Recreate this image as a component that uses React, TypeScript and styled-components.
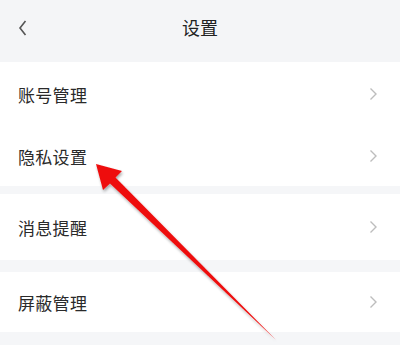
import styled, { createGlobalStyle } from "styled-components";

const GlobalStyle = createGlobalStyle`
    html, body {
        margin: 0;
        padding: 0;
        background: #f5f6f8;
    }
    body {
        font-family: "Noto Sans CJK SC", "Noto Sans", sans-serif;
    }
`;

const Page = styled.div`
    position: relative;
    width: 400px;
    height: 345px;
    overflow: hidden;
    background: #f5f6f8;
`;

const Header = styled.header`
    height: 62px;
    display: flex;
    align-items: center;
    justify-content: center;
    position: relative;
    background: #f4f5f7;
`;

const Back = styled.div`
    position: absolute;
    left: 18px;
    top: 20px;
    display: flex;
`;

const Title = styled.h1`
    margin: 0;
    font-size: 18px;
    font-weight: 400;
    color: #222;
    transform: translateY(-4px);
`;

const Group = styled.section<{ gap: number }>`
    background: #fff;
    margin-bottom: ${(p) => p.gap}px;
`;

const Row = styled.div<{ h: number }>`
    height: ${(p) => p.h}px;
    display: flex;
    align-items: center;
    justify-content: space-between;
    padding: 0 22px 0 18px;
    font-size: 17px;
    color: #2a2a2a;
`;

const Label = styled.span`
    letter-spacing: 0.3px;
`;

const Arrow = styled.svg`
    position: absolute;
    left: 0;
    top: 0;
    pointer-events: none;
`;

function Chevron() {
    return (
        <svg width="9" height="14" viewBox="0 0 9 14">
            <path d="M1.5 1.5 L7 7 L1.5 12.5" fill="none" stroke="#bdbdbd" strokeWidth="1.4" />
        </svg>
    );
}

const groups = [
    { gap: 8, rows: [{ label: "账号管理", h: 64 }, { label: "隐私设置", h: 60 }] },
    { gap: 12, rows: [{ label: "消息提醒", h: 66 }] },
    { gap: 12, rows: [{ label: "屏蔽管理", h: 60 }] },
];

function App() {
    return (
        <Page>
            <GlobalStyle />
            <Header>
                <Back>
                    <svg width="10" height="16" viewBox="0 0 10 16">
                        <path d="M7.5 1 L2 8 L7.5 15" fill="none" stroke="#555" strokeWidth="1.6" />
                    </svg>
                </Back>
                <Title>设置</Title>
            </Header>
            {groups.map((g, i) => (
                <Group key={i} gap={g.gap}>
                    {g.rows.map((r) => (
                        <Row key={r.label} h={r.h}>
                            <Label>{r.label}</Label>
                            <Chevron />
                        </Row>
                    ))}
                </Group>
            ))}
            <Arrow width="400" height="345" viewBox="0 0 400 345">
                <defs>
                    <filter id="sh" x="-20%" y="-20%" width="140%" height="140%">
                        <feGaussianBlur in="SourceAlpha" stdDeviation="1.5" />
                        <feOffset dx="1" dy="1.5" />
                        <feComponentTransfer>
                            <feFuncA type="linear" slope="0.35" />
                        </feComponentTransfer>
                        <feMerge>
                            <feMergeNode />
                            <feMergeNode in="SourceGraphic" />
                        </feMerge>
                    </filter>
                </defs>
                <g filter="url(#sh)">
                    <path d="M96 164 L122 171 L115.5 177.5 L276 340 L110 183.5 L103 190 Z" fill="#ee1111" />
                </g>
            </Arrow>
        </Page>
    );
}

export default App;
